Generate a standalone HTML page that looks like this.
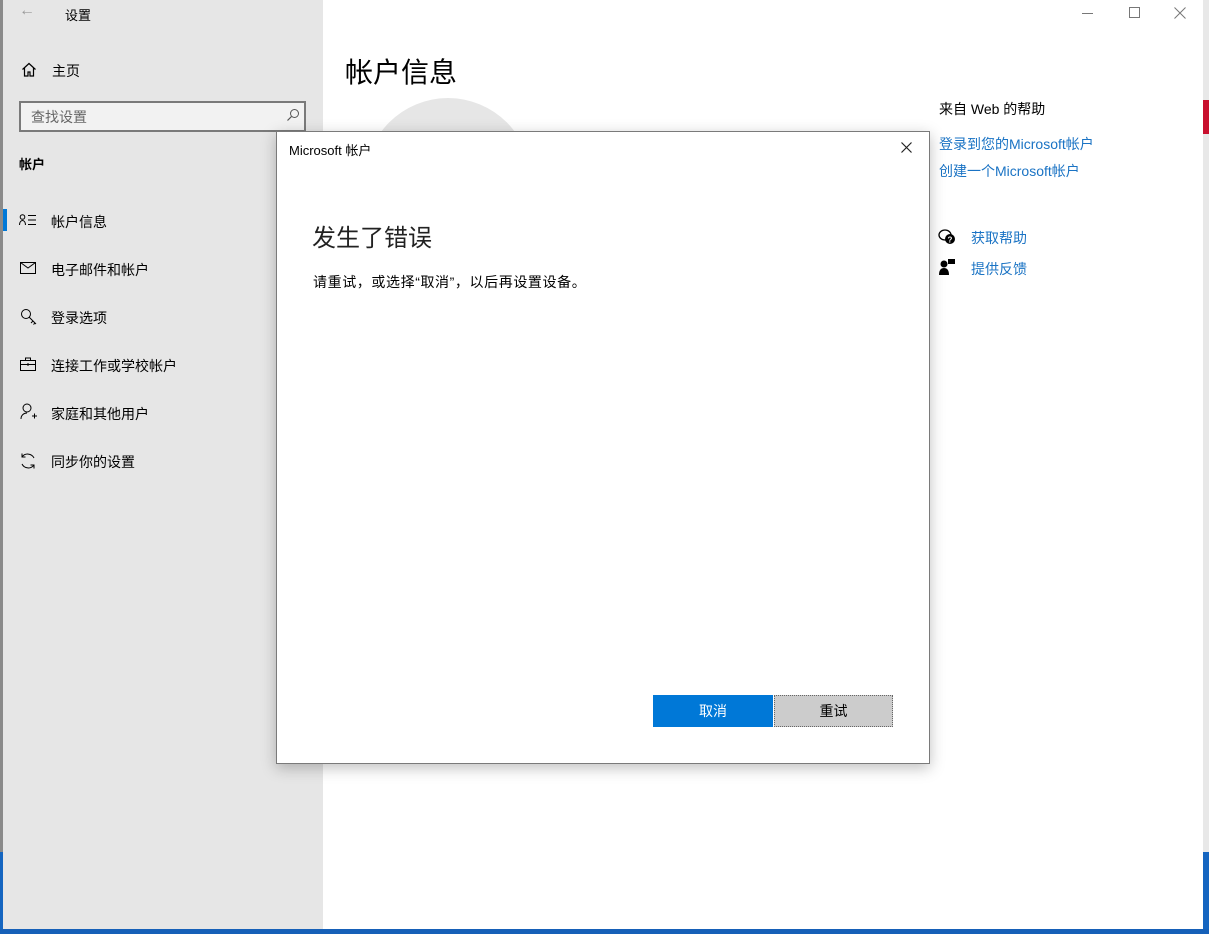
<!DOCTYPE html>
<html><head><meta charset="utf-8"><style>
*{margin:0;padding:0;box-sizing:border-box}
body{width:1209px;height:934px;overflow:hidden;position:relative;background:#d8d8d8;font-family:"Liberation Sans","Noto Sans CJK SC",sans-serif;color:#000}
.abs{position:absolute}
#side{left:3px;top:0;width:320px;height:929px;background:#e6e6e6}
#main{left:323px;top:0;width:880px;height:929px;background:#fff}
.t{position:absolute;white-space:nowrap}
.nav{font-size:14px;color:#000}
.link{color:#1a73c4;font-size:14px}
</style></head><body>
<div class="abs" style="left:0;top:0;width:3px;height:934px;background:#8a8a8a"></div>
<div class="abs" style="left:1203px;top:0;width:6px;height:934px;background:#e8e8e8"></div>
<div class="abs" style="left:1203px;top:100px;width:6px;height:34px;background:#c8102e"></div>
<div class="abs" style="left:0;top:852px;width:3px;height:82px;background:#1565c0"></div>
<div class="abs" style="left:1203px;top:852px;width:6px;height:82px;background:#1565c0"></div>
<div class="abs" style="left:0;top:929px;width:1209px;height:5px;background:#1660b8"></div>
<div id="side" class="abs">
 <div class="t" style="left:16px;top:2px;font-size:16px;color:#999">←</div>
 <div class="t nav" style="left:62px;top:5px;font-size:13px">设置</div>
 <svg class="abs" style="left:18px;top:62px" width="16" height="16" viewBox="0 0 16 16"><path d="M1.5 7.5L8 1.5l6.5 6M3.5 6v8h3.5v-4h2v4h3.5V6" fill="none" stroke="#000" stroke-width="1.2"/></svg>
 <div class="t nav" style="left:49px;top:61px">主页</div>
 <div class="abs" style="left:16px;top:101px;width:287px;height:31px;border:2px solid #7a7a7a;background:#f2f2f2"></div>
 <div class="t" style="left:28px;top:107px;font-size:14px;color:#666">查找设置</div>
 <svg class="abs" style="left:283px;top:108px" width="14" height="14" viewBox="0 0 14 14"><circle cx="8.5" cy="5.5" r="4" fill="none" stroke="#555" stroke-width="1"/><path d="M5.5 8.5L1.5 12.5" stroke="#555" stroke-width="1.2"/></svg>
 <div class="t" style="left:16px;top:154px;font-size:13px;font-weight:bold">帐户</div>
 <div class="abs" style="left:0;top:209px;width:4px;height:22px;background:#0078d7"></div>
 <svg class="abs" style="left:16px;top:214px" width="18" height="12"><circle cx="3.5" cy="3" r="2.3" fill="none" stroke="#000"/><path d="M0.5 11c0-3 1.5-4.5 3-4.5s3 1.5 3 4.5M9 1.5h8M9 6h8M9 10.5h8" fill="none" stroke="#000"/></svg>
 <div class="t nav" style="left:48px;top:212px">帐户信息</div>
 <svg class="abs" style="left:17px;top:262px" width="16" height="12"><rect x="0.5" y="0.5" width="15" height="11" fill="none" stroke="#000"/><path d="M0.5 0.5L8 6l7.5-5.5" fill="none" stroke="#000"/></svg>
 <div class="t nav" style="left:48px;top:260px">电子邮件和帐户</div>
 <svg class="abs" style="left:17px;top:308px" width="18" height="18" viewBox="0 0 18 18"><circle cx="6" cy="6" r="4.5" fill="none" stroke="#000"/><path d="M9 9l7 7M13 13l-2 2M15 15l-1.5 1.5" fill="none" stroke="#000"/></svg>
 <div class="t nav" style="left:48px;top:308px">登录选项</div>
 <svg class="abs" style="left:17px;top:357px" width="16" height="14"><rect x="0.5" y="3.5" width="15" height="10" fill="none" stroke="#000"/><path d="M5.5 3.5V1h5v2.5M0.5 7.5h15M8 6v3" fill="none" stroke="#000"/></svg>
 <div class="t nav" style="left:48px;top:356px">连接工作或学校帐户</div>
 <svg class="abs" style="left:17px;top:403px" width="18" height="18"><circle cx="7" cy="5" r="4" fill="none" stroke="#000"/><path d="M1 16c0-4 3-6 6-6M12 13h5M14.5 10.5v5" fill="none" stroke="#000"/></svg>
 <div class="t nav" style="left:48px;top:404px">家庭和其他用户</div>
 <svg class="abs" style="left:16px;top:452px" width="18" height="18"><path d="M15 6A7 7 0 0 0 3 5M3 12a7 7 0 0 0 12 1M3 1.5V5h3.5M15 16.5V13h-3.5" fill="none" stroke="#000"/></svg>
 <div class="t nav" style="left:48px;top:452px">同步你的设置</div>
</div>
<div id="main" class="abs">
 <div class="abs" style="left:759px;top:13px;width:11px;height:1px;background:#777"></div>
 <div class="abs" style="left:806px;top:7px;width:11px;height:11px;border:1px solid #777"></div>
 <svg class="abs" style="left:851px;top:7px" width="12" height="12"><path d="M0.5 0.5l11 11M11.5 0.5l-11 11" stroke="#777"/></svg>
 <div class="t" style="left:22px;top:51px;font-size:28px">帐户信息</div>
 <div class="abs" style="left:42px;top:98px;width:166px;height:166px;border-radius:50%;background:#e6e6e6"></div>
 <div class="t" style="left:616px;top:99px;font-size:14px">来自 Web 的帮助</div>
 <div class="t link" style="left:616px;top:134px">登录到您的Microsoft帐户</div>
 <div class="t link" style="left:616px;top:161px">创建一个Microsoft帐户</div>
 <svg class="abs" style="left:615px;top:229px" width="18" height="16"><ellipse cx="7" cy="6" rx="6" ry="5" fill="none" stroke="#000" stroke-width="1.3"/><circle cx="12" cy="10" r="5" fill="#000"/><text x="12" y="13.5" font-size="8" fill="#fff" text-anchor="middle" font-family="Liberation Sans" font-weight="bold">?</text></svg>
 <div class="t link" style="left:648px;top:228px">获取帮助</div>
 <svg class="abs" style="left:616px;top:259px" width="16" height="16"><circle cx="5" cy="5" r="3.5"/><path d="M0 16c0-5 2-7 5-7s5 2 5 7z"/><rect x="9" y="0" width="7" height="5"/></svg>
 <div class="t link" style="left:648px;top:259px">提供反馈</div>
</div>
<div class="abs" style="left:276px;top:131px;width:654px;height:633px;background:#fff;border:1px solid #7a7a7a;box-shadow:0 4px 14px rgba(0,0,0,.25)">
 <div class="t" style="left:12px;top:8px;font-size:13px">Microsoft 帐户</div>
 <svg class="abs" style="left:624px;top:10px" width="11" height="11"><path d="M0.5 0.5l10 10M10.5 0.5l-10 10" stroke="#222" stroke-width="1.2"/></svg>
 <div class="t" style="left:35px;top:86px;font-size:24px;color:#222">发生了错误</div>
 <div class="t" style="left:36px;top:140px;font-size:14px;letter-spacing:0.6px">请重试，或选择“取消”，以后再设置设备。</div>
 <div class="abs" style="left:376px;top:563px;width:120px;height:32px;background:#0078d7;color:#fff;font-size:14px;text-align:center;line-height:32px">取消</div>
 <div class="abs" style="left:497px;top:563px;width:119px;height:32px;background:#cccccc;border:1px dotted #666;font-size:14px;text-align:center;line-height:30px">重试</div>
</div>
</body></html>
